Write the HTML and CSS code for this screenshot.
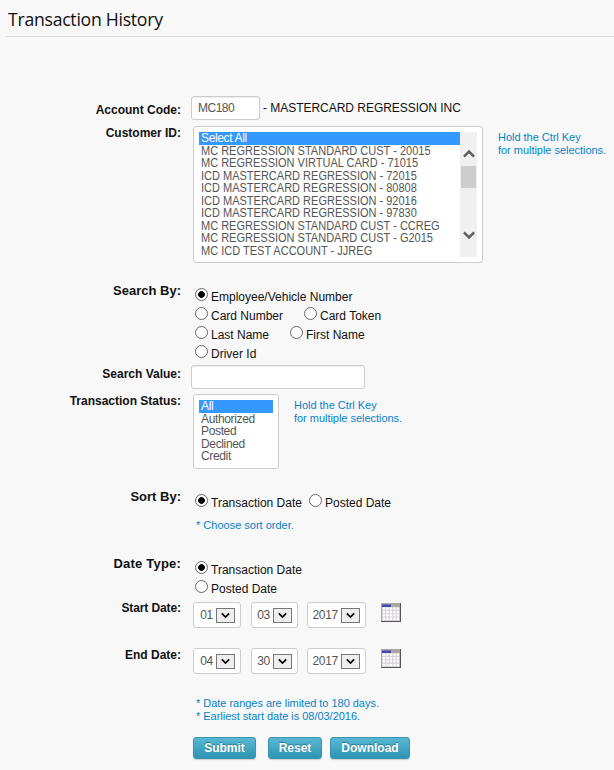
FILE: index.html
```html
<!DOCTYPE html>
<html lang="en">
<head>
<meta charset="utf-8">
<title>Transaction History</title>
<link rel="stylesheet" href="styles.css">
</head>
<body>
<svg class="defs" width="0" height="0">
  <symbol id="calendar" viewBox="0 0 20 19">
    <rect width="20" height="19" fill="#555558"/>
    <rect width="19" height="18" fill="#a9a7a5"/>
    <rect x="1" y="4" width="17.5" height="14" fill="#d8d3d8"/>
    <path d="M1 1.5h9v2.5H1z" fill="#4646ac"/>
    <path d="M3 4.5v13M6.5 4.5v13M10 4.5v13M13.5 4.5v13M17 4.5v13" stroke="#fff" stroke-width="2.3" stroke-dasharray="2.3 1.1"/>
  </symbol>
  <symbol id="chevron" viewBox="0 0 12 9"><path d="M.9 1.4l5.1 5 5.1-5" fill="none" stroke="currentColor" stroke-width="2.6"/></symbol>
  <symbol id="chevron-small" viewBox="0 0 9 7"><path d="M.8 1.3l3.7 3.7 3.7-3.7" fill="none" stroke="currentColor" stroke-width="1.7"/></symbol>
</svg>
<header class="header"><h1>Transaction History</h1></header>
<form class="form">
  <div class="row account">
    <label class="label">Account Code:</label>
    <div class="field"><span class="input code">MC180</span><span class="company">- MASTERCARD REGRESSION INC</span></div>
  </div>
  <div class="row customer">
    <label class="label">Customer ID:</label>
    <div class="field">
      <div class="listbox wide">
        <ul class="options">
          <li class="selected">Select All</li>
          <li>MC REGRESSION STANDARD CUST - 20015</li>
          <li>MC REGRESSION VIRTUAL CARD - 71015</li>
          <li>ICD MASTERCARD REGRESSION - 72015</li>
          <li>ICD MASTERCARD REGRESSION - 80808</li>
          <li>ICD MASTERCARD REGRESSION - 92016</li>
          <li>ICD MASTERCARD REGRESSION - 97830</li>
          <li>MC REGRESSION STANDARD CUST - CCREG</li>
          <li>MC REGRESSION STANDARD CUST - G2015</li>
          <li>MC ICD TEST ACCOUNT - JJREG</li>
        </ul>
        <div class="scrollbar">
          <svg class="arrow up"><use href="#chevron"/></svg>
          <span class="thumb"></span>
          <svg class="arrow down"><use href="#chevron"/></svg>
        </div>
      </div>
      <p class="hint">Hold the Ctrl Key<br>for multiple selections.</p>
    </div>
  </div>
  <div class="row search-by">
    <label class="label large">Search By:</label>
    <div class="radios">
      <div class="line"><span class="radio on"></span><span>Employee/Vehicle Number</span></div>
      <div class="line"><span class="radio"></span><span class="card">Card Number</span><span class="radio"></span><span>Card Token</span></div>
      <div class="line"><span class="radio"></span><span class="last">Last Name</span><span class="radio"></span><span>First Name</span></div>
      <div class="line"><span class="radio"></span><span>Driver Id</span></div>
    </div>
  </div>
  <div class="row search-value">
    <label class="label">Search Value:</label>
    <div class="field"><span class="input value"></span></div>
  </div>
  <div class="row status">
    <label class="label">Transaction Status:</label>
    <div class="field">
      <div class="listbox narrow">
        <ul class="options">
          <li class="selected">All</li>
          <li>Authorized</li>
          <li>Posted</li>
          <li>Declined</li>
          <li>Credit</li>
        </ul>
      </div>
      <p class="hint">Hold the Ctrl Key<br>for multiple selections.</p>
    </div>
  </div>
  <div class="row sort-by">
    <label class="label large">Sort By:</label>
    <div class="radios">
      <div class="line"><span class="radio on"></span><span class="sort">Transaction Date</span><span class="radio"></span><span>Posted Date</span></div>
      <p class="note">* Choose sort order.</p>
    </div>
  </div>
  <div class="row date-type">
    <label class="label large">Date Type:</label>
    <div class="radios">
      <div class="line"><span class="radio on"></span><span>Transaction Date</span></div>
      <div class="line"><span class="radio"></span><span>Posted Date</span></div>
    </div>
  </div>
  <div class="row start">
    <label class="label">Start Date:</label>
    <div class="field dates">
      <span class="select month">01<i><svg><use href="#chevron-small"/></svg></i></span>
      <span class="select day">03<i><svg><use href="#chevron-small"/></svg></i></span>
      <span class="select year">2017<i><svg><use href="#chevron-small"/></svg></i></span>
      <svg class="calendar"><use href="#calendar"/></svg>
    </div>
  </div>
  <div class="row end">
    <label class="label">End Date:</label>
    <div class="field dates">
      <span class="select month">04<i><svg><use href="#chevron-small"/></svg></i></span>
      <span class="select day">30<i><svg><use href="#chevron-small"/></svg></i></span>
      <span class="select year">2017<i><svg><use href="#chevron-small"/></svg></i></span>
      <svg class="calendar"><use href="#calendar"/></svg>
    </div>
  </div>
  <p class="note limits">* Date ranges are limited to 180 days.<br>* Earliest start date is 08/03/2016.</p>
  <div class="actions">
    <button type="button" class="submit">Submit</button>
    <button type="button" class="reset">Reset</button>
    <button type="button" class="download">Download</button>
  </div>
</form>
</body>
</html>
```
FILE: styles.css
```css
* { box-sizing: border-box; }
body { margin: 0; height: 770px; overflow: hidden; background: #f8f8f8; color: #111; font: 12px/14px "Liberation Sans", Arial, sans-serif; white-space: nowrap; }
.defs { display: block; }
h1, p, ul { margin: 0; padding: 0; font-weight: normal; }
.header { height: 37px; margin-left: 6px; padding: 7px 0 0 2px; border-bottom: 1px solid #dcdcdc; }
h1 { font: 19px/25px "Open Sans", sans-serif; letter-spacing: -0.3px; transform: scaleX(.93); transform-origin: left; }
.row { display: grid; grid-template-columns: 181px 1fr; align-items: start; }
.label { font-weight: bold; text-align: right; }
.large { font-size: 13px; }
.field { display: flex; align-items: flex-start; }
.input { display: block; height: 24px; border: 1px solid #ccc; border-radius: 3px; background: #fff; box-shadow: inset 0 1px 1px #eee; color: #555; }

.account { height: 30px; margin-top: 59px; }
.account .label { padding-top: 7px; }
.code { width: 69px; margin-left: 10px; padding: 4px 0 0 6px; letter-spacing: -.5px; }
.company { padding: 5px 0 0 3px; letter-spacing: -.03px; }

.customer { height: 159px; }
.listbox { display: flex; padding: 5px; border: 1px solid #ccc; border-radius: 3px; background: #fff; margin-left: 12px; color: #555; }
.wide { width: 290px; height: 137px; }
.narrow { width: 86px; height: 75px; }
.options { flex: 1; min-width: 0; list-style: none; line-height: 12.5px; letter-spacing: -.35px; }
.options li { height: 12.5px; padding-left: 2px; }
.wide li:not(.selected) { letter-spacing: 0; transform: scaleX(.917); transform-origin: 2px 0; }
.options .selected { background: #3399ff; color: #fff; }
.scrollbar { display: flex; flex: none; flex-direction: column; align-items: center; width: 17px; height: 125px; background: #f0f0f0; color: #606060; }
.arrow { width: 12px; height: 9px; }
.up { margin-top: 17px; transform: scaleY(-1); }
.thumb { width: 15px; height: 22px; margin: 8px 0 43px; background: #cdcdcd; }
.hint, .note { font-size: 11px; line-height: 13px; color: #0782c8; }
.hint { margin: 5px 0 0 15px; letter-spacing: -.03px; }

.search-by { height: 80px; }
.search-by .label { margin-top: -1px; }
.radios { padding-left: 14px; }
.line { display: flex; align-items: center; height: 19px; }
.line span:not(.radio) { padding: 5px 0 0 3px; }
.radio { width: 13px; height: 13px; border: 1px solid #666; border-radius: 50%; background: #fff; }
.on { background: radial-gradient(circle, #000 0 3px, #fff 3.7px); }
.card { width: 96px; }
.last { width: 82px; }
.sort { width: 101px; }

.search-value { height: 29px; }
.search-value .label { padding-top: 2px; }
.value { width: 174px; margin-left: 10px; }
.status { height: 96px; }
.sort-by { height: 67px; }
.sort-by .radios, .date-type .radios { padding-top: 1px; }
.sort-by .note { padding: 9px 0 0 1px; }
.date-type { height: 45px; }
.date-type .label { letter-spacing: .2px; }
.start { height: 46px; }
.start .label { margin-top: -1px; letter-spacing: -.1px; }
.end { height: 49px; }
.select { display: flex; justify-content: flex-end; height: 26px; padding: 5px 5px 0 0; border: 1px solid #ccc; border-radius: 3px; background: #fff; color: #555; letter-spacing: -.3px; }
.select i { display: flex; align-items: center; justify-content: center; width: 19px; height: 15px; margin-left: 3px; border: 1px solid #777; background: #eee; color: #000; }
.select svg { width: 9px; height: 7px; }
.month { width: 48px; margin-left: 12px; }
.day { width: 47px; margin-left: 10px; }
.year { width: 59px; margin-left: 9px; }
.calendar { width: 20px; height: 19px; margin: 1px 0 0 15px; }

.limits { margin-left: 196px; letter-spacing: -.03px; }
.actions { display: flex; margin: 14px 0 0 193px; }
button { height: 22px; padding: 0; border: 1px solid #3d93ad; border-radius: 3px; background: linear-gradient(#59b9d3, #2d94b3); color: #fff; font: bold 12px "Liberation Sans", Arial, sans-serif; text-shadow: 0 -1px 1px #28758c; box-shadow: 0 1px 1px #ccc; }
.submit { width: 63px; }
.reset { width: 54px; margin-left: 12px; }
.download { width: 80px; margin-left: 8px; }
```
